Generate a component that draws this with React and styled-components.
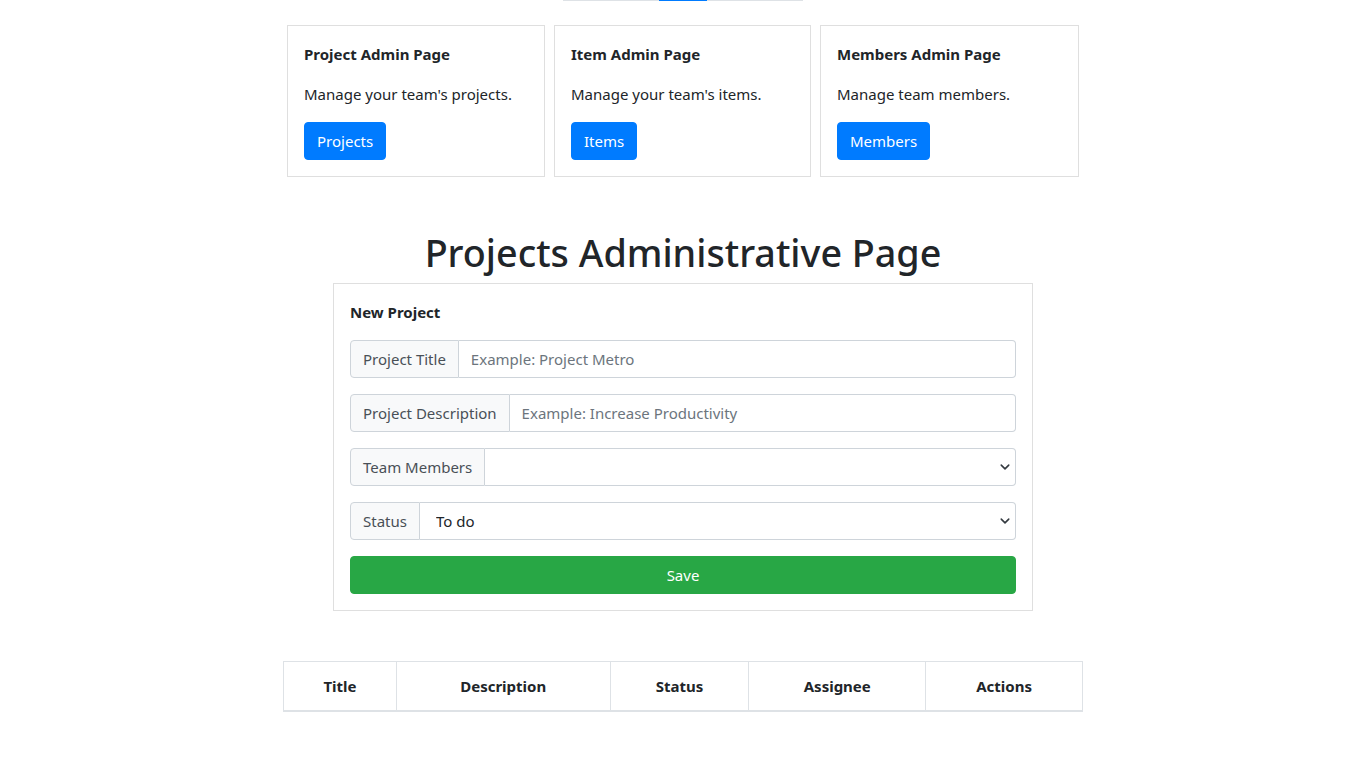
import React from "react";
import styled, { createGlobalStyle } from "styled-components";

const Global = createGlobalStyle`
  html, body { margin: 0; padding: 0; background: #fff; }
  body {
    font-family: "Noto Sans", "Open Sans", sans-serif;
    font-size: 15px;
    line-height: 1.5;
    color: #212529;
  }
  * { box-sizing: border-box; }
`;

const Page = styled.div`
  display: flex;
  flex-direction: column;
  align-items: center;
  padding-bottom: 60px;
`;

const TabStrip = styled.div`
  display: flex;
  height: 1px;
  width: 240px;
`;

const TabLine = styled.div`
  height: 1px;
  width: ${(p) => p.$w}px;
  background: ${(p) => (p.$active ? "#007bff" : "#dee2e6")};
`;

const CardRow = styled.div`
  display: flex;
  gap: 9px;
  margin-top: 24px;
`;

const Card = styled.div`
  width: ${(p) => p.$w}px;
  border: 1px solid rgba(0, 0, 0, 0.125);
  padding: 16px;
  background: #fff;
`;

const CardTitle = styled.h5`
  margin: 0 0 16px;
  font-size: 15px;
  font-weight: 700;
  line-height: 24px;
`;

const CardText = styled.p`
  margin: 0 0 16px;
  font-size: 15px;
  line-height: 24px;
`;

const Button = styled.button`
  font-family: inherit;
  font-size: 15px;
  line-height: 24px;
  height: 38px;
  padding: 6px 12px;
  border: 1px solid ${(p) => (p.$variant === "success" ? "#28a745" : "#007bff")};
  background: ${(p) => (p.$variant === "success" ? "#28a745" : "#007bff")};
  color: #fff;
  border-radius: 4px;
  cursor: pointer;
  width: ${(p) => (p.$block ? "100%" : "auto")};
`;

const Heading = styled.h1`
  margin: 52px 0 6px;
  font-size: 37.7px;
  font-weight: 500;
  line-height: 48px;
  text-align: center;
`;

const FormCard = styled.form`
  width: 700px;
  border: 1px solid rgba(0, 0, 0, 0.125);
  padding: 16px;
  display: flex;
  flex-direction: column;
  gap: 16px;
`;

const FormTitle = styled.div`
  font-weight: 700;
  font-size: 15px;
  line-height: 24px;
`;

const InputGroup = styled.div`
  display: flex;
  height: 38px;
  position: relative;
`;

const Addon = styled.span`
  display: flex;
  align-items: center;
  padding: 0 12px;
  background: #f8f9fa;
  border: 1px solid #ced4da;
  border-radius: 4px 0 0 4px;
  color: #495057;
  white-space: nowrap;
`;

const Input = styled.input`
  flex: 1;
  min-width: 0;
  font-family: inherit;
  font-size: 15px;
  padding: 0 12px;
  border: 1px solid #ced4da;
  border-left: none;
  border-radius: 0 4px 4px 0;
  color: #495057;
  outline: none;
  &::placeholder { color: #6c757d; }
`;

const Select = styled.select`
  flex: 1;
  min-width: 0;
  appearance: none;
  -webkit-appearance: none;
  font-family: inherit;
  font-size: 15px;
  padding: 0 32px 0 16px;
  border: 1px solid #ced4da;
  border-left: none;
  border-radius: 0 4px 4px 0;
  background: #fff;
  color: #212529;
  outline: none;
`;

const Chevron = styled.svg`
  position: absolute;
  right: 6px;
  top: 14px;
  width: 10px;
  height: 10px;
  pointer-events: none;
`;

const Table = styled.table`
  margin-top: 50px;
  border-collapse: collapse;
  width: 800px;
`;

const Th = styled.th`
  width: ${(p) => p.$w}px;
  padding: 12px;
  border: 1px solid #dee2e6;
  border-bottom: 2px solid #dee2e6;
  font-weight: 700;
  line-height: 24px;
  text-align: center;
`;

const cards = [
  { title: "Project Admin Page", text: "Manage your team's projects.", btn: "Projects", w: 258 },
  { title: "Item Admin Page", text: "Manage your team's items.", btn: "Items", w: 257 },
  { title: "Members Admin Page", text: "Manage team members.", btn: "Members", w: 259 },
];

const cols = [
  ["Title", 113],
  ["Description", 214],
  ["Status", 139],
  ["Assignee", 177],
  ["Actions", 157],
];

function SelectChevron() {
  return (
    <Chevron viewBox="0 0 16 16">
      <path d="M2 5l6 6 6-6" fill="none" stroke="#343a40" strokeWidth="2.5" strokeLinecap="round" strokeLinejoin="round" />
    </Chevron>
  );
}

export default function App() {
  return (
    <>
      <Global />
      <Page>
        <TabStrip>
          <TabLine $w={96} />
          <TabLine $w={48} $active />
          <TabLine $w={96} />
        </TabStrip>
        <CardRow>
          {cards.map((c) => (
            <Card key={c.title} $w={c.w}>
              <CardTitle>{c.title}</CardTitle>
              <CardText>{c.text}</CardText>
              <Button type="button">{c.btn}</Button>
            </Card>
          ))}
        </CardRow>
        <Heading>Projects Administrative Page</Heading>
        <FormCard onSubmit={(e) => e.preventDefault()}>
          <FormTitle>New Project</FormTitle>
          <InputGroup>
            <Addon>Project Title</Addon>
            <Input placeholder="Example: Project Metro" />
          </InputGroup>
          <InputGroup>
            <Addon>Project Description</Addon>
            <Input placeholder="Example: Increase Productivity" />
          </InputGroup>
          <InputGroup>
            <Addon>Team Members</Addon>
            <Select defaultValue="">
              <option value=""></option>
            </Select>
            <SelectChevron />
          </InputGroup>
          <InputGroup>
            <Addon>Status</Addon>
            <Select defaultValue="todo">
              <option value="todo">To do</option>
              <option value="progress">In progress</option>
              <option value="done">Done</option>
            </Select>
            <SelectChevron />
          </InputGroup>
          <Button type="submit" $variant="success" $block>
            Save
          </Button>
        </FormCard>
        <Table>
          <thead>
            <tr>
              {cols.map(([t, w]) => (
                <Th key={t} $w={w}>{t}</Th>
              ))}
            </tr>
          </thead>
        </Table>
      </Page>
    </>
  );
}
